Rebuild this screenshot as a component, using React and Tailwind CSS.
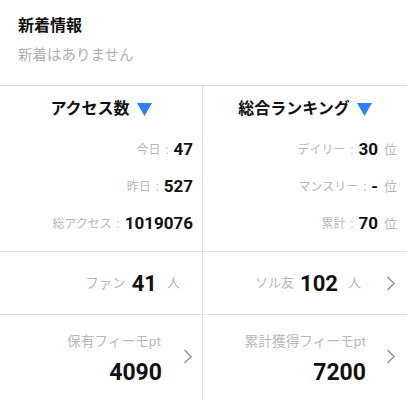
const font = { fontFamily: 'Roboto, "Noto Sans CJK JP", sans-serif' };

function Tri() {
  return (
    <svg width="15" height="13" viewBox="0 0 15 13" className="ml-[7px]">
      <path d="M0 0 H15 L7.5 13 Z" fill="#2f7ff5" />
    </svg>
  );
}

function Stat({ label, value, unit }) {
  return (
    <div className="h-[37px] flex items-center justify-end">
      <span className="text-[12px] text-[#b8b8b8]">{label}</span>
      <span className="text-[12px] text-[#b8b8b8] mx-[5px]">:</span>
      <span className="text-[17px] font-bold text-[#111]">{value}</span>
      {unit && <span className="text-[13px] text-[#b8b8b8] ml-[6px]">{unit}</span>}
    </div>
  );
}

function Chevron() {
  return (
    <svg width="10" height="15" viewBox="0 0 10 15" className="block">
      <path d="M1.5 1 L8 7.5 L1.5 14" fill="none" stroke="#9a9a9a" strokeWidth="1.6" />
    </svg>
  );
}

export default function App() {
  return (
    <div className="w-[407px] h-[400px] bg-white overflow-hidden" style={font}>
      <div className="h-[86px] pl-[18px] pt-[14px] border-b border-[#e2e2e2]">
        <h2 className="text-[16px] font-bold text-[#111] leading-[24px]">新着情報</h2>
        <p className="text-[14.5px] text-[#b0b0b0] leading-[22px] mt-[7px]">新着はありません</p>
      </div>

      <div className="grid grid-cols-[203px_1fr]">
        <div className="h-[166px] border-r border-b border-[#e2e2e2] pr-[9px]">
          <div className="flex items-center justify-center pl-[9px] pt-[11px] h-[35px] leading-[24px]">
            <span className="text-[16px] font-bold text-[#111]">アクセス数</span>
            <Tri />
          </div>
          <div className="mt-[10px]">
            <Stat label="今日" value="47" />
            <Stat label="昨日" value="527" />
            <Stat label="総アクセス" value="1019076" />
          </div>
        </div>
        <div className="h-[166px] border-b border-[#e2e2e2] pr-[10px]">
          <div className="flex items-center justify-center pl-[10px] pt-[11px] h-[35px] leading-[24px]">
            <span className="text-[16px] font-bold text-[#111]">総合ランキング</span>
            <Tri />
          </div>
          <div className="mt-[10px]">
            <Stat label="デイリー" value="30" unit="位" />
            <Stat label="マンスリー" value="-" unit="位" />
            <Stat label="累計" value="70" unit="位" />
          </div>
        </div>

        <div className="h-[63px] border-r border-b border-[#e2e2e2] flex items-center justify-end pr-[22px]">
          <span className="text-[13.5px] text-[#b8b8b8]">ファン</span>
          <span className="text-[22px] font-bold text-[#111] ml-[6px]">41</span>
          <span className="text-[13px] text-[#b8b8b8] ml-[10px]">人</span>
        </div>
        <div className="h-[63px] border-b border-[#e2e2e2] flex items-center justify-end pr-[11px]">
          <span className="text-[13px] text-[#b8b8b8]">ソル友</span>
          <span className="text-[22px] font-bold text-[#111] ml-[6px]">102</span>
          <span className="text-[13px] text-[#b8b8b8] ml-[10px]">人</span>
          <span className="ml-[25px]"><Chevron /></span>
        </div>

        <div className="h-[85px] border-r border-[#e2e2e2] flex items-center justify-end pr-[9px]">
          <div className="flex flex-col items-end pt-[4px]">
            <span className="text-[13.7px] text-[#b8b8b8] leading-[18px] mr-[2px]">保有フィーモpt</span>
            <span className="text-[23px] font-bold text-[#111] leading-[30px] mt-[8px] mr-[1px]">4090</span>
          </div>
          <span className="ml-[20px] -mt-[2px]"><Chevron /></span>
        </div>
        <div className="h-[85px] flex items-center justify-end pr-[11px]">
          <div className="flex flex-col items-end pt-[4px]">
            <span className="text-[13.7px] text-[#b8b8b8] leading-[18px]">累計獲得フィーモpt</span>
            <span className="text-[23px] font-bold text-[#111] leading-[30px] mt-[8px]">7200</span>
          </div>
          <span className="ml-[20px] -mt-[2px]"><Chevron /></span>
        </div>
      </div>
    </div>
  );
}
